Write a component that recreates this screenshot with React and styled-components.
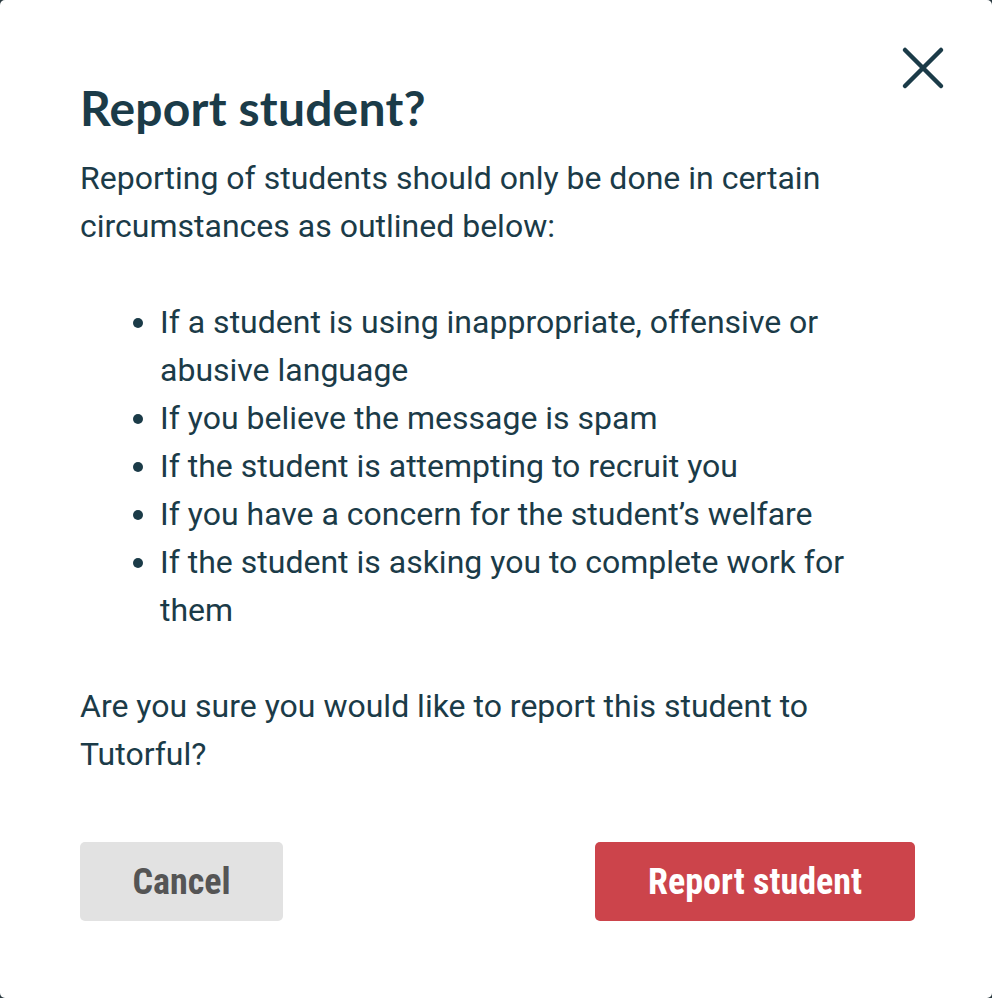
import React from "react";
import styled, { createGlobalStyle } from "styled-components";

const GlobalStyle = createGlobalStyle`
	html, body {
		margin: 0;
		padding: 0;
		background-color: #2b3a40;
	}
	* {
		box-sizing: border-box;
	}
`;

const items = [
	"If a student is using inappropriate, offensive or abusive language",
	"If you believe the message is spam",
	"If the student is attempting to recruit you",
	"If you have a concern for the student\u2019s welfare",
	"If the student is asking you to complete work for them",
];

const App = () => {
	return (
		<>
			<GlobalStyle />
			<Modal>
				<Close aria-label="Close">
					<svg width="44" height="44" viewBox="0 0 44 44">
						<path
							d="M4 4 L40 40 M40 4 L4 40"
							stroke="#1b3b48"
							strokeWidth="4.5"
							strokeLinecap="round"
						/>
					</svg>
				</Close>
				<Title>Report student?</Title>
				<Text>
					Reporting of students should only be done in certain
					circumstances as outlined below:
				</Text>
				<List>
					{items.map((item) => (
						<Item key={item}>{item}</Item>
					))}
				</List>
				<Text>
					Are you sure you would like to report this student to
					Tutorful?
				</Text>
				<Actions>
					<Button>Cancel</Button>
					<Button $danger>Report student</Button>
				</Actions>
			</Modal>
		</>
	);
};

const Modal = styled.div`
	position: relative;
	width: 992px;
	height: 998px;
	background-color: #ffffff;
	border-radius: 5px;
	padding: 80px 77px 0 80px;
	color: #1b3b48;
	font-family: Roboto, "Noto Sans", sans-serif;
`;

const Close = styled.button`
	position: absolute;
	top: 46px;
	right: 47px;
	width: 44px;
	height: 44px;
	padding: 0;
	border: none;
	background: transparent;
	cursor: pointer;
	display: flex;
	align-items: center;
	justify-content: center;
`;

const Title = styled.h1`
	margin: 0 0 18px 0;
	font-family: Lato, "Open Sans", sans-serif;
	font-weight: 700;
	font-size: 48px;
	line-height: 56px;
	letter-spacing: 0.2px;
`;

const Text = styled.p`
	margin: 0;
	font-size: 32px;
	line-height: 48px;
	font-weight: 400;
`;

const List = styled.ul`
	margin: 48px 0;
	padding-left: 80px;
	font-size: 32px;
	line-height: 48px;
`;

const Item = styled.li`
	padding-left: 0;
`;

const Actions = styled.div`
	margin-top: 64px;
	display: flex;
	justify-content: space-between;
	align-items: center;
`;

const Button = styled.button`
	height: 79px;
	width: ${(p) => (p.$danger ? "320px" : "203px")};
	border: none;
	border-radius: 5px;
	background-color: ${(p) => (p.$danger ? "#cc444b" : "#e2e2e2")};
	color: ${(p) => (p.$danger ? "#ffffff" : "#555555")};
	font-family: "Liberation Sans Narrow", "Roboto Condensed", Roboto, sans-serif;
	font-weight: 700;
	font-size: 36px;
	cursor: pointer;
`;

export default App;
